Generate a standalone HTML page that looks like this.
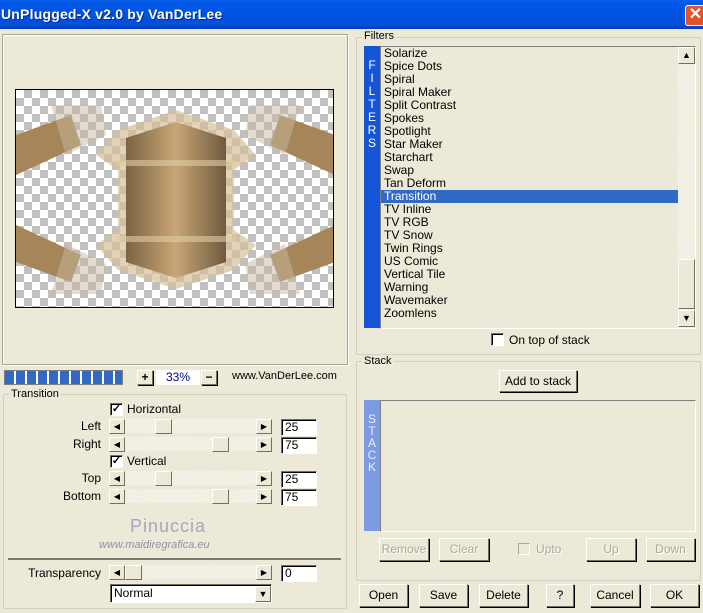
<!DOCTYPE html>
<html><head><meta charset="utf-8"><style>
*{box-sizing:border-box;margin:0;padding:0}
body{width:703px;height:613px;overflow:hidden;background:#ece9d8;font-family:"Liberation Sans",sans-serif;font-size:11px;color:#000;position:relative}
.a{position:absolute}
.title{left:0;top:0;width:703px;height:29px;background:linear-gradient(#0a5fe8 0%,#0058e6 10%,#0054e3 40%,#0050d8 85%,#003dbb 100%)}
.title span{position:absolute;left:1px;top:6px;color:#fff;font-weight:bold;font-size:14px;letter-spacing:0.2px;text-shadow:1px 1px 0 #0a2a8a}
.close{left:685px;top:5px;width:21px;height:21px;background:#e0532f;border:1px solid #fff;border-radius:3px;color:#fff;font-weight:bold;font-size:16px;text-align:center;line-height:18px}
.box{border:1px solid #a8a596;box-shadow:inset 1px 1px 0 #fff,1px 1px 0 #fff}
.grp{border:1px solid #d0d0bf;border-radius:2px}
.lbl{background:#ece9d8;padding:0 2px}
.btn{border:1px solid;border-color:#fff #716f64 #716f64 #fff;box-shadow:1px 1px 0 #000 ;background:#ece9d8;text-align:center;font-size:12px}
.dis{color:#aca899;text-shadow:1px 1px 0 #fff}
.inp{background:#fff;border:1px solid;border-color:#716f64 #fff #fff #716f64;box-shadow:inset 1px 1px 0 #000;font-size:12px;padding-left:3px;line-height:15px}
.track{height:14px;background:repeating-linear-gradient(45deg,#ece9d8 0 1px,#f7f6ef 1px 2px)}
.sb{width:16px;height:15px;border:1px solid;border-color:#fff #716f64 #716f64 #fff;background:#ece9d8}
.chk{width:13px;height:13px;background:#fff;border:1px solid;border-color:#716f64 #fff #fff #716f64;box-shadow:inset 1px 1px 0 #000;font-size:11px;line-height:11px;text-align:center;font-weight:bold}
.list div{height:13px;line-height:13px;padding-left:3px;font-size:12px}
.r{text-align:right;font-size:12px}
</style></head><body>
<div class="a title"><span>UnPlugged-X v2.0 by VanDerLee</span></div>
<div class="a close">✕</div>

<div class="a box" style="left:2px;top:34px;width:346px;height:331px"></div>
<div class="a" style="left:15px;top:89px;width:319px;height:219px;border:1px solid #000;background-color:#fff;background-image:linear-gradient(45deg,#c0c0c0 25%,transparent 25%,transparent 75%,#c0c0c0 75%),linear-gradient(45deg,#c0c0c0 25%,transparent 25%,transparent 75%,#c0c0c0 75%);background-size:16px 16px;background-position:0 0,8px 8px;overflow:hidden">
<svg width="319" height="219" style="position:absolute;left:0;top:0">
<defs><linearGradient id="g" x1="0" x2="1"><stop offset="0" stop-color="#7a6444"/><stop offset=".5" stop-color="#c9a676"/><stop offset="1" stop-color="#6e5a40"/></linearGradient></defs>
<polygon points="102,40 160,20 218,40 240,65 218,80 218,140 240,155 218,180 160,199 102,180 80,155 102,140 102,80 80,65" fill="#d6c09a" opacity=".7"/>
<polygon points="110,48 160,32 210,48 210,172 160,188 110,172" fill="url(#g)"/>
<rect x="100" y="70" width="120" height="6" fill="#e0cba4" opacity=".6"/>
<rect x="100" y="146" width="120" height="6" fill="#e0cba4" opacity=".6"/>
<polygon points="0,45 55,25 65,55 0,85" fill="#a68658"/>
<polygon points="0,135 65,165 55,192 0,172" fill="#a68658"/>
<polygon points="319,45 264,25 254,55 319,85" fill="#a68658"/>
<polygon points="319,135 254,165 264,192 319,172" fill="#a68658"/>
<polygon points="35,15 85,15 90,45 50,65" fill="#c8b8a0" opacity=".5"/>
<polygon points="284,15 234,15 229,45 269,65" fill="#c8b8a0" opacity=".5"/>
<polygon points="35,204 85,204 90,174 50,154" fill="#c8b8a0" opacity=".5"/>
<polygon points="284,204 234,204 229,174 269,154" fill="#c8b8a0" opacity=".5"/>
</svg></div>

<div class="a" style="left:4px;top:370px;width:119px;height:15px;border:1px solid #808080;background:repeating-linear-gradient(90deg,#3169c6 0 9px,#fff 9px 11px)"></div>
<div class="a btn" style="left:137px;top:370px;width:16px;height:15px;line-height:12px;font-weight:bold">+</div>
<div class="a" style="left:156px;top:370px;width:44px;height:15px;background:#fff;color:#000080;text-align:center;font-size:12px;line-height:15px">33%</div>
<div class="a btn" style="left:201px;top:370px;width:16px;height:15px;line-height:12px;font-weight:bold">−</div>
<div class="a" style="left:232px;top:370px;font-size:11px">www.VanDerLee.com</div>

<div class="a grp" style="left:3px;top:394px;width:344px;height:215px"></div>
<div class="a lbl" style="left:9px;top:388px;font-size:11px">Transition</div>

<div class="a chk" style="left:110px;top:403px">✓</div><div class="a" style="left:127px;top:402px;font-size:12px">Horizontal</div>
<div class="a r" style="left:40px;width:61px;top:419px">Left</div>
<div class="a r" style="left:40px;width:61px;top:437px">Right</div>
<div class="a chk" style="left:110px;top:455px">✓</div><div class="a" style="left:127px;top:454px;font-size:12px">Vertical</div>
<div class="a r" style="left:40px;width:61px;top:471px">Top</div>
<div class="a r" style="left:40px;width:61px;top:489px">Bottom</div>
<div class="a r" style="left:20px;width:81px;top:566px">Transparency</div>

<div class="a track" style="left:110px;top:419px;width:162px"></div>
<div class="a sb" style="left:109px;top:419px;font-size:8px;line-height:13px;text-align:center">◀</div>
<div class="a sb" style="left:256px;top:419px;font-size:8px;line-height:13px;text-align:center">▶</div>
<div class="a sb" style="left:155px;top:419px;width:17px"></div>
<div class="a inp" style="left:281px;top:419px;width:36px;height:17px">25</div>

<div class="a track" style="left:110px;top:437px;width:162px"></div>
<div class="a sb" style="left:109px;top:437px;font-size:8px;line-height:13px;text-align:center">◀</div>
<div class="a sb" style="left:256px;top:437px;font-size:8px;line-height:13px;text-align:center">▶</div>
<div class="a sb" style="left:212px;top:437px;width:17px"></div>
<div class="a inp" style="left:281px;top:437px;width:36px;height:17px">75</div>

<div class="a track" style="left:110px;top:471px;width:162px"></div>
<div class="a sb" style="left:109px;top:471px;font-size:8px;line-height:13px;text-align:center">◀</div>
<div class="a sb" style="left:256px;top:471px;font-size:8px;line-height:13px;text-align:center">▶</div>
<div class="a sb" style="left:155px;top:471px;width:17px"></div>
<div class="a inp" style="left:281px;top:471px;width:36px;height:17px">25</div>

<div class="a track" style="left:110px;top:489px;width:162px"></div>
<div class="a sb" style="left:109px;top:489px;font-size:8px;line-height:13px;text-align:center">◀</div>
<div class="a sb" style="left:256px;top:489px;font-size:8px;line-height:13px;text-align:center">▶</div>
<div class="a sb" style="left:212px;top:489px;width:17px"></div>
<div class="a inp" style="left:281px;top:489px;width:36px;height:17px">75</div>

<div class="a" style="left:130px;top:516px;font-size:18px;color:#a6a6c0;letter-spacing:1px">Pinuccia</div>
<div class="a" style="left:99px;top:539px;font-size:11px;font-style:italic;color:#9090a8">www.maidiregrafica.eu</div>
<div class="a" style="left:8px;top:558px;width:333px;height:2px;background:#7a7868"></div>

<div class="a track" style="left:110px;top:565px;width:162px"></div>
<div class="a sb" style="left:109px;top:565px;font-size:8px;line-height:13px;text-align:center">◀</div>
<div class="a sb" style="left:256px;top:565px;font-size:8px;line-height:13px;text-align:center">▶</div>
<div class="a sb" style="left:125px;top:565px;width:17px"></div>
<div class="a inp" style="left:281px;top:565px;width:36px;height:17px">0</div>
<div class="a inp" style="left:110px;top:584px;width:162px;height:19px;line-height:17px">Normal</div>
<div class="a sb" style="left:255px;top:586px;width:16px;height:16px;font-size:9px;text-align:center;line-height:14px">▼</div>

<div class="a grp" style="left:356px;top:37px;width:345px;height:318px"></div>
<div class="a lbl" style="left:362px;top:30px;font-size:11px">Filters</div>
<div class="a" style="left:364px;top:46px;width:16px;height:282px;background:#1556d8;color:#fff;font-size:12px;text-align:center;line-height:13px;padding-top:13px">F<br>I<br>L<br>T<br>E<br>R<br>S</div>
<div class="a" style="left:380px;top:46px;width:316px;height:283px;border:1px solid;border-color:#808080 #fff #fff #808080"></div>
<div class="a list" style="left:381px;top:47px;width:297px">
<div>Solarize</div><div>Spice Dots</div><div>Spiral</div><div>Spiral Maker</div><div>Split Contrast</div><div>Spokes</div><div>Spotlight</div><div>Star Maker</div><div>Starchart</div><div>Swap</div><div>Tan Deform</div><div style="background:#316ac5;color:#fff">Transition</div><div>TV Inline</div><div>TV RGB</div><div>TV Snow</div><div>Twin Rings</div><div>US Comic</div><div>Vertical Tile</div><div>Warning</div><div>Wavemaker</div><div>Zoomlens</div>
</div>
<div class="a track" style="left:678px;top:47px;width:17px;height:281px"></div>
<div class="a sb" style="left:678px;top:47px;width:17px;height:17px;font-size:9px;text-align:center;line-height:14px">▲</div>
<div class="a sb" style="left:678px;top:259px;width:17px;height:50px"></div>
<div class="a sb" style="left:678px;top:310px;width:17px;height:17px;font-size:9px;text-align:center;line-height:14px">▼</div>
<div class="a chk" style="left:491px;top:333px"></div><div class="a" style="left:509px;top:333px;font-size:12px">On top of stack</div>

<div class="a grp" style="left:356px;top:361px;width:345px;height:220px"></div>
<div class="a lbl" style="left:362px;top:355px;font-size:11px">Stack</div>
<div class="a btn" style="left:499px;top:370px;width:78px;height:22px;line-height:20px">Add to stack</div>
<div class="a" style="left:364px;top:400px;width:16px;height:131px;background:#7c9be0;color:#e8eefa;font-size:12px;text-align:center;line-height:12px;padding-top:13px">S<br>T<br>A<br>C<br>K</div>
<div class="a" style="left:380px;top:400px;width:316px;height:132px;border:1px solid;border-color:#808080 #fff #fff #808080"></div>
<div class="a btn dis" style="left:379px;top:538px;width:50px;height:23px;line-height:21px">Remove</div>
<div class="a btn dis" style="left:439px;top:538px;width:50px;height:23px;line-height:21px">Clear</div>
<div class="a" style="left:518px;top:543px;width:12px;height:12px;border:1px solid;border-color:#aca899 #fff #fff #aca899"></div>
<div class="a dis" style="left:536px;top:542px;font-size:12px">Upto</div>
<div class="a btn dis" style="left:586px;top:538px;width:50px;height:23px;line-height:21px">Up</div>
<div class="a btn dis" style="left:646px;top:538px;width:49px;height:23px;line-height:21px">Down</div>

<div class="a btn" style="left:359px;top:584px;width:49px;height:23px;line-height:21px">Open</div>
<div class="a btn" style="left:419px;top:584px;width:49px;height:23px;line-height:21px">Save</div>
<div class="a btn" style="left:479px;top:584px;width:49px;height:23px;line-height:21px">Delete</div>
<div class="a btn" style="left:546px;top:584px;width:28px;height:23px;line-height:21px">?</div>
<div class="a btn" style="left:590px;top:584px;width:50px;height:23px;line-height:21px">Cancel</div>
<div class="a btn" style="left:650px;top:584px;width:49px;height:23px;line-height:21px">OK</div>
</body></html>
